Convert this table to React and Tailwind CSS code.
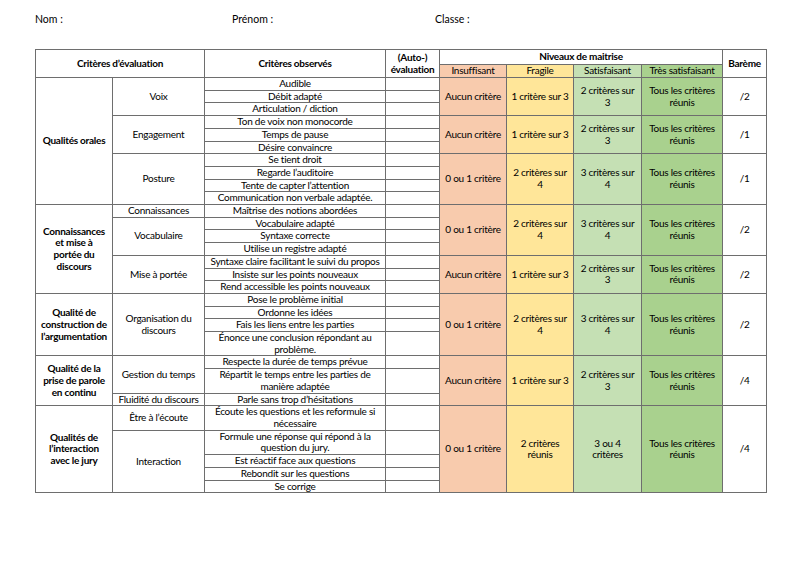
const groups = [
  {
    title: ['Qualités orales'],
    subs: [
      { name: 'Voix', items: ['Audible', 'Débit adapté', 'Articulation / diction'] },
      { name: 'Engagement', items: ['Ton de voix non monocorde', 'Temps de pause', 'Désire convaincre'] },
      { name: 'Posture', items: ['Se tient droit', 'Regarde l’auditoire', 'Tente de capter l’attention', 'Communication non verbale adaptée.'] },
    ],
  },
  {
    title: ['Connaissances', 'et mise à', 'portée du', 'discours'],
    subs: [
      { name: 'Connaissances', items: ['Maîtrise des notions abordées'] },
      { name: 'Vocabulaire', items: ['Vocabulaire adapté', 'Syntaxe correcte', 'Utilise un registre adapté'] },
      { name: 'Mise à portée', items: ['Syntaxe claire facilitant le suivi du propos', 'Insiste sur les points nouveaux', 'Rend accessible les points nouveaux'] },
    ],
  },
  {
    title: ['Qualité de', 'construction de', 'l’argumentation'],
    subs: [
      { name: 'Organisation du discours', items: ['Pose le problème initial', 'Ordonne les idées', 'Fais les liens entre les parties', 'Énonce une conclusion répondant au problème.'] },
    ],
  },
  {
    title: ['Qualité de la', 'prise de parole', 'en continu'],
    subs: [
      { name: 'Gestion du temps', items: ['Respecte la durée de temps prévue', 'Répartit le temps entre les parties de manière adaptée'] },
      { name: 'Fluidité du discours', items: ['Parle sans trop d’hésitations'] },
    ],
  },
  {
    title: ['Qualités de', 'l’interaction', 'avec le jury'],
    subs: [
      { name: 'Être à l’écoute', items: ['Écoute les questions et les reformule si nécessaire'] },
      { name: 'Interaction', items: ['Formule une réponse qui répond à la question du jury.', 'Est réactif face aux questions', 'Rebondit sur les questions', 'Se corrige'] },
    ],
  },
];

const three = ['Aucun critère', '1 critère sur 3', '2 critères sur 3', 'Tous les critères réunis'];
const four = ['0 ou 1 critère', '2 critères sur 4', '3 critères sur 4', 'Tous les critères réunis'];

// level blocks: first flat row, row span, texts, barème
const levels = [
  { start: 0, span: 3, t: three, b: '/2' },
  { start: 3, span: 3, t: three, b: '/1' },
  { start: 6, span: 4, t: four, b: '/1' },
  { start: 10, span: 4, t: four, b: '/2' },
  { start: 14, span: 3, t: three, b: '/2' },
  { start: 17, span: 4, t: four, b: '/2' },
  { start: 21, span: 3, t: three, b: '/4' },
  { start: 24, span: 5, t: ['0 ou 1 critère', '2 critères réunis', '3 ou 4 critères', 'Tous les critères réunis'], b: '/4' },
];

const levelBg = ['bg-[#f8cbad]', 'bg-[#ffe699]', 'bg-[#c5e0b4]', 'bg-[#a9d18e]'];
const levelPad = ['px-[4px]', 'px-[4px]', 'px-[5px]', 'px-[4px]'];

const cell = 'border border-[#6e6e6e] text-center align-middle px-[1px] py-0';

function buildRows() {
  const rows = [];
  let idx = 0;
  groups.forEach((g) => {
    const gCount = g.subs.reduce((n, s) => n + s.items.length, 0);
    g.subs.forEach((s, si) => {
      s.items.forEach((item, ii) => {
        const lvl = levels.find((l) => l.start === idx);
        rows.push(
          <tr key={idx}>
            {si === 0 && ii === 0 && (
              <td rowSpan={gCount} className={`${cell} font-bold`}>
                {g.title.map((l) => (
                  <div key={l}>{l}</div>
                ))}
              </td>
            )}
            {ii === 0 && (
              <td rowSpan={s.items.length} className={`${cell} px-[2px]`}>
                {s.name}
              </td>
            )}
            <td className={`${cell} px-[3px]`}>{item}</td>
            <td className={cell}></td>
            {lvl &&
              lvl.t.map((t, k) => (
                <td key={k} rowSpan={lvl.span} className={`${cell} ${levelPad[k]} border-[#4a4a4a] ${levelBg[k]}`}>
                  {t}
                </td>
              ))}
            {lvl && (
              <td rowSpan={lvl.span} className={cell}>
                {lvl.b}
              </td>
            )}
          </tr>
        );
        idx++;
      });
    });
  });
  return rows;
}

export default function App() {
  return (
    <div className="w-[800px] h-[566px] bg-white text-black font-['Lato','Liberation_Sans',sans-serif] text-[10px] tracking-[-0.25px] leading-[11.7px] pl-[35px] pt-[13px]">
      <div className="flex h-[14px] items-center text-[10.5px] tracking-normal">
        <div className="w-[197px]">Nom :</div>
        <div className="w-[203px]">Prénom :</div>
        <div>Classe :</div>
      </div>
      <table className="mt-[22px] w-[731px] table-fixed border-collapse border border-[#8a8a8a]">
        <colgroup>
          <col className="w-[77px]" />
          <col className="w-[92px]" />
          <col className="w-[181px]" />
          <col className="w-[54px]" />
          <col className="w-[67px]" />
          <col className="w-[67px]" />
          <col className="w-[68px]" />
          <col className="w-[81px]" />
          <col className="w-[44px]" />
        </colgroup>
        <thead>
          <tr className="h-[15px]">
            <th colSpan={2} rowSpan={2} className={`${cell} font-bold`}>
              Critères d’évaluation
            </th>
            <th rowSpan={2} className={`${cell} font-bold`}>
              Critères observés
            </th>
            <th rowSpan={2} className={`${cell} font-bold`}>
              (Auto-)
              <br />
              évaluation
            </th>
            <th colSpan={4} className={`${cell} font-bold`}>
              Niveaux de maitrise
            </th>
            <th rowSpan={2} className={`${cell} font-bold`}>
              Barème
            </th>
          </tr>
          <tr className="h-[13px]">
            {['Insuffisant', 'Fragile', 'Satisfaisant', 'Très satisfaisant'].map((l, k) => (
              <th key={l} className={`${cell} font-normal border-[#4a4a4a] ${levelBg[k]}`}>
                {l}
              </th>
            ))}
          </tr>
        </thead>
        <tbody>{buildRows()}</tbody>
      </table>
    </div>
  );
}
